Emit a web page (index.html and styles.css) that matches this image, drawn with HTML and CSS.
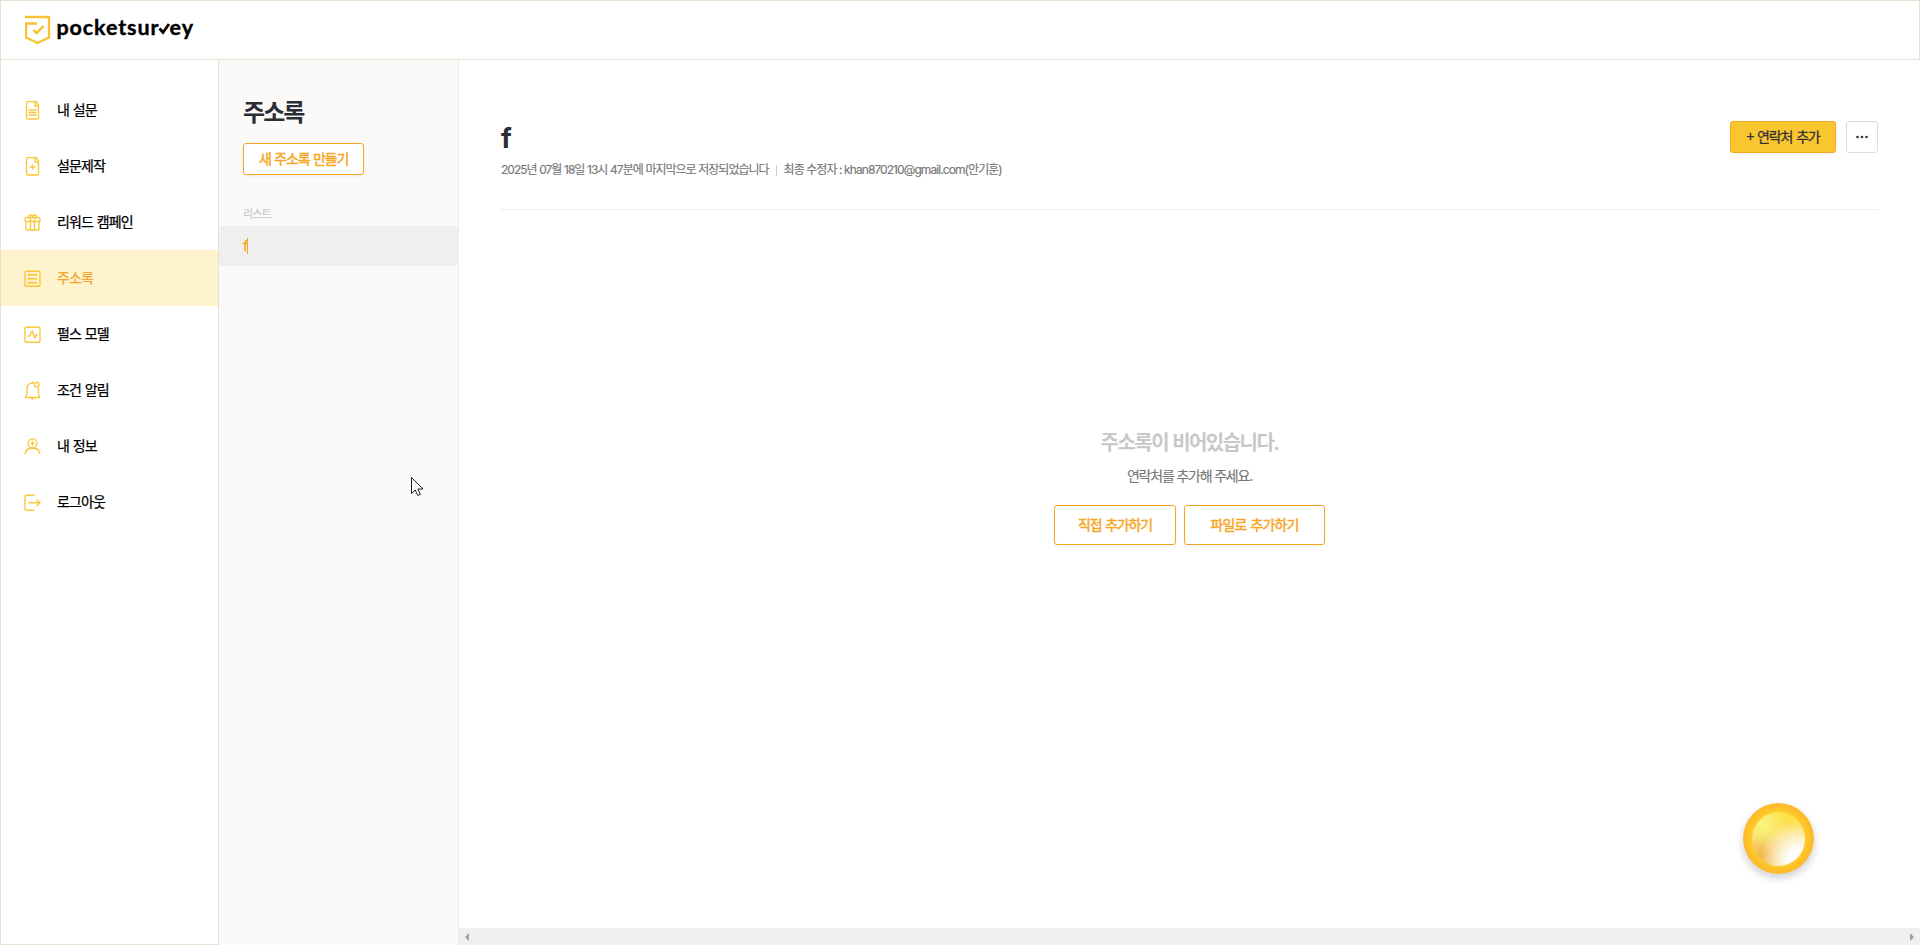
FILE: index.html
```html
<!DOCTYPE html>
<html lang="ko">
<head>
<meta charset="utf-8">
<title>pocketsurvey</title>
<link rel="stylesheet" href="styles.css">
</head>
<body>
<div class="app">
  <header class="header">
    <svg class="logo" width="176" height="36" viewBox="0 0 176 36">
      <path d="M0 4H24V24.500L12.500 30L1 24.500V10.500H12" fill="none" stroke="#f9c132" stroke-width="2.300"/>
      <path d="M8.500 17L11.500 20.200L18.500 13" fill="none" stroke="#f9c132" stroke-width="2.500"/>
      <text class="logo-text" y="21.500"><tspan x="31.500" textLength="102">pocketsur</tspan><tspan x="134" fill="none" stroke="none">v</tspan><tspan x="144.500" textLength="23.500">ey</tspan></text>
      <path d="M134.500 15.500L138 19.500L144 11" fill="none" stroke="#000" stroke-width="2.800"/>
    </svg>
  </header>
  <div class="body">
    <nav class="nav">
      <a class="nav-item"><svg class="icon" viewBox="0 0 18 20"><path d="M12 .5H4Q2.500 .5 2.500 2V16.500Q2.500 18 4 18H13Q14.500 18 14.500 16.500V4ZM11 .5V5H14.500M4.500 9H12.500M4.500 11.500H12.500M4.500 14H12.500"/></svg><span>내 설문</span></a>
      <a class="nav-item"><svg class="icon" viewBox="0 0 18 20"><path d="M12 .5H4Q2.500 .5 2.500 2V16.500Q2.500 18 4 18H13Q14.500 18 14.500 16.500V4ZM11 .5V5H14.500M8.500 7.300V12.700M5.800 10H11.200"/></svg><span>설문제작</span></a>
      <a class="nav-item"><svg class="icon" viewBox="0 0 18 20"><path d="M2.500 4.500H14.500Q16 4.500 16 6V7.500Q16 8.500 15 8.500H2Q1 8.500 1 7.500V6Q1 4.500 2.500 4.500ZM2 8.500V16Q2 17 3 17H14Q15 17 15 16V8.500M6.500 4.500V17M10.500 4.500V17M8.500 4.500H6.500Q4.800 4.500 4.800 3.200Q4.800 2 6.500 2Q8.500 2 8.500 4.500Q8.500 2 10.700 2Q12.200 2 12.200 3.200Q12.200 4.500 10.500 4.500"/></svg><span>리워드 캠페인</span></a>
      <a class="nav-item active"><svg class="icon" viewBox="0 0 18 20"><rect x="1" y="2.200" width="15" height="15" rx="1"/><path d="M3.500 5.700H13.200M3.500 9.700H13.200M3.500 13.700H13.200"/><path d="M5 4.700V6.700M5 8.700V10.700M5 12.700V14.700"/></svg><span>주소록</span></a>
      <a class="nav-item"><svg class="icon" viewBox="0 0 18 20"><rect x="1" y="2.200" width="15" height="15" rx="1"/><path d="M3.500 11H5.700L8.200 5.800L10.700 13.200L12.200 9.700H13.700"/></svg><span>펄스 모델</span></a>
      <a class="nav-item"><svg class="icon" viewBox="0 0 18 20"><path d="M8.500 .5V2.200M10 2.200Q3 1.500 3 8.200V13.200L1.200 16.500H15.800L14.500 13.200V6.200M7 16.500Q8.500 19.500 10 16.500"/><circle cx="12.700" cy="3.700" r="2.300"/></svg><span>조건 알림</span></a>
      <a class="nav-item"><svg class="icon" viewBox="0 0 18 20"><circle cx="8.500" cy="6.400" r="4.500"/><path d="M8.500 4.100V8.700M6.200 6.400H10.800M1 17.300Q1.500 11.200 8.500 11Q15.500 11.200 16 17.300"/></svg><span>내 정보</span></a>
      <a class="nav-item"><svg class="icon" viewBox="0 0 18 20"><path d="M10.500 2.200H3Q1 2.200 1 3.700V15.700Q1 17.200 3 17.200H10.500M4.500 9.700H16M12.500 6.200L16 9.700L12.500 13.200"/></svg><span>로그아웃</span></a>
    </nav>
    <aside class="lists">
      <h1 class="lists-title">주소록</h1>
      <button class="btn new-list"><span>새 주소록 만들기</span></button>
      <div class="lists-label">리스트</div>
      <div class="list-row"><span class="list-name">f</span></div>
    </aside>
    <main class="main">
      <div class="content">
        <div class="content-head">
          <div>
            <h2 class="book-title">f</h2>
            <div class="meta"><span class="saved">2025년 07월 18일 13시 47분에 마지막으로 저장되었습니다</span><i class="divider"></i><span class="editor">최종 수정자 : khan870210@gmail.com(안기훈)</span></div>
          </div>
          <div class="actions">
            <button class="btn add"><span>+ 연락처 추가</span></button>
            <button class="btn more"><svg width="14" height="4" viewBox="0 0 14 4"><circle cx="2.500" cy="2" r="1.300"/><circle cx="7" cy="2" r="1.300"/><circle cx="11.500" cy="2" r="1.300"/></svg></button>
          </div>
        </div>
        <div class="empty">
          <p class="empty-title">주소록이 비어있습니다.</p>
          <p class="empty-text">연락처를 추가해 주세요.</p>
          <div class="empty-buttons"><button class="btn direct"><span>직접 추가하기</span></button><button class="btn file"><span>파일로 추가하기</span></button></div>
        </div>
      </div>
      <div class="scrollbar"><i class="arrow-left"></i><i class="arrow-right"></i></div>
    </main>
  </div>
</div>
<div class="bubble"></div>
<svg class="cursor" width="13" height="20" viewBox="0 0 13 20"><path d="M.5 .5V16.500L4.200 13L6.800 18.500L9.300 17.300L6.900 12H12Z" fill="#fff" stroke="#1b1b29"/></svg>
</body>
</html>
```
FILE: styles.css
```css
* { box-sizing: border-box; }
body { margin: 0; font-family: Inter, "Noto Sans CJK KR", sans-serif; background: #fff; overflow: hidden; }
h1, h2, p { margin: 0; }
.app { height: 945px; display: flex; flex-direction: column; }
.header { height: 60px; flex: none; border: 1px solid #e8dfd2; padding: 12px 24px; }
.logo { display: block; }
.logo-text { font: 700 21.500px Lato, sans-serif; stroke: #000; stroke-width: .4px; }
.body { flex: 1; min-height: 0; display: flex; }
.nav { width: 219px; flex: none; border: solid #e8dfd2; border-width: 0 1px 1px; padding-top: 22px; }
.nav-item { display: flex; align-items: center; height: 56px; padding-left: 23px; gap: 15px; font-family: "Noto Sans CJK KR", sans-serif; font-size: 14px; font-weight: 400; letter-spacing: -.85px; word-spacing: .6px; color: #000; -webkit-text-stroke: .25px currentColor; }
.nav-item span { padding-bottom: 2px; }
.nav-item.active { background: #fef3cd; color: #f5a62b; }
.icon { width: 18px; height: 20px; margin-top: 2px; fill: none; stroke: #fac63a; stroke-width: 1.350; stroke-linejoin: round; }
.lists { width: 240px; flex: none; background: #fbfaf8; border-right: 1px solid #eee; }
.lists-title { padding: 36px 0 0 24px; font-size: 24px; line-height: 34px; color: #2a2e34; letter-spacing: -1.900px; }
.btn { display: flex; align-items: center; justify-content: center; height: 32px; padding: 0; border: 1px solid #f5a623; border-radius: 3px; background: #fff; color: #f5a623; font: 400 14px "Noto Sans CJK KR", sans-serif; letter-spacing: -1.200px; word-spacing: 1px; -webkit-text-stroke: .45px currentColor; box-shadow: 0 1px 4px rgba(0,0,0,.06); white-space: nowrap; }
.btn span { padding-bottom: 2px; }
.new-list { width: 121px; margin: 13px 0 0 24px; }
.lists-label { margin: 31px 0 4px 24px; font-size: 11px; line-height: 16px; letter-spacing: -.9px; color: #c6c6c6; -webkit-text-stroke: .2px currentColor; }
.list-row { height: 40px; display: flex; align-items: center; padding-left: 24px; border-radius: 4px; background: #efefef; }
.list-name { font-size: 14px; line-height: 16px; color: #f5a623; border-right: 1px solid #f5a623; width: 5px; -webkit-text-stroke: .3px currentColor; }
.main { flex: 1; min-width: 0; display: flex; flex-direction: column; }
.content { flex: 1; padding: 61px 42px 0; }
.content-head { display: flex; justify-content: space-between; height: 89px; border-bottom: 1px solid #eee; }
.book-title { padding-top: 1px; font-size: 27px; line-height: 33px; color: #2a2e34; }
.meta { display: flex; align-items: center; margin-top: 6px; font-size: 12px; line-height: 18px; color: #777; -webkit-text-stroke: .15px currentColor; white-space: nowrap; }
.saved { letter-spacing: -1px; word-spacing: .300px; }
.editor { letter-spacing: -.920px; }
.divider { width: 1px; height: 11px; margin: 0 7px; background: #ccc; }
.actions { display: flex; gap: 10px; }
.add { width: 106px; background: #fac62f; color: #333; letter-spacing: -1.150px; word-spacing: 1.200px; -webkit-text-stroke-width: .3px; }
.more { width: 32px; border-color: #ddd; box-shadow: none; fill: #333; }
.empty { margin-top: 217px; display: flex; flex-direction: column; align-items: center; }
.empty-title { font-size: 20px; line-height: 32px; font-weight: 700; letter-spacing: -1.550px; word-spacing: 1px; color: #c8c8c8; }
.empty-text { margin-top: 6px; font-size: 14px; line-height: 22px; letter-spacing: -1.200px; color: #777; -webkit-text-stroke: .15px currentColor; }
.empty-buttons { display: flex; gap: 8px; margin-top: 18px; }
.empty-buttons .btn { height: 40px; }
.direct { width: 122px; }
.file { width: 141px; letter-spacing: -.900px; }
.scrollbar { height: 17px; display: flex; align-items: center; justify-content: space-between; padding: 0 6px; background: #f0f0f0; }
.arrow-left, .arrow-right { border: 4px solid transparent; border-left-width: 0; border-right: 4px solid #a0a0a0; }
.arrow-right { transform: scaleX(-1); }
.bubble { position: absolute; left: 1743px; top: 803px; width: 71px; height: 71px; border-radius: 50%; background: radial-gradient(circle closest-side, #ffcb2b 76%, #fdb62a 100%); box-shadow: 0 4px 8px rgba(0,0,0,.2); }
.bubble::after { content: ""; position: absolute; left: 9px; top: 9px; width: 53px; height: 54px; border-radius: 50%; background: radial-gradient(circle at 88% 88%, #fff 14%, rgba(255,255,255,0) 58%), radial-gradient(circle at 20% 20%, #f8f582, rgba(248,245,130,0) 40%), radial-gradient(circle at 20% 82%, #f1b544, rgba(241,181,68,0) 40%), linear-gradient(#ffe23c, #f8dc7a 60%); }
.cursor { position: absolute; left: 411px; top: 477px; }
```
